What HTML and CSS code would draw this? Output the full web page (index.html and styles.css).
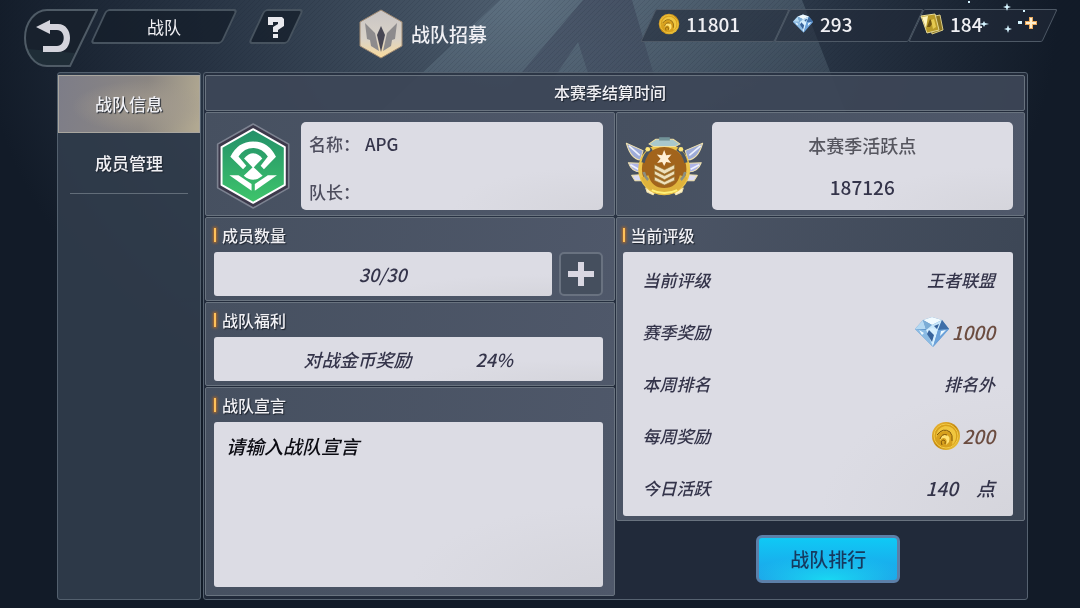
FILE: index.html
```html
<!DOCTYPE html>
<html lang="zh-CN">
  <head>
    <meta charset="utf-8">
    <title>战队</title>
    <link rel="stylesheet" href="styles.css">
  </head>
  <body>
    <svg class="backdrop" viewBox="0 0 1080 608" preserveAspectRatio="xMidYMin slice" aria-hidden="true">
      <defs>
        <linearGradient id="beam" x1="0" y1="0" x2="0" y2="1">
          <stop offset="0" stop-color="#8aa4b2" stop-opacity=".25"/>
          <stop offset=".5" stop-color="#8aa4b2" stop-opacity="0"/>
        </linearGradient>
        <linearGradient id="leg" x1="0" y1="0" x2="0" y2="1">
          <stop offset="0" stop-color="#3a4257" stop-opacity=".55"/>
          <stop offset=".5" stop-color="#3a4257" stop-opacity="0"/>
        </linearGradient>
        <pattern id="hatch" width="5" height="5" patternUnits="userSpaceOnUse">
          <path d="M-1 1l2-2M0 5l5-5M4 6l2-2" stroke="#0f1a28" stroke-opacity=".12"/>
        </pattern>
      </defs>
      <path fill="url(#beam)" d="M500 0H802L1040 608H-150Z"/>
      <path fill="url(#leg)" d="M583 0H632L810 608H760L578 42L200 608H68Z"/>
      <path fill="url(#hatch)" d="M0 0H1080V72H0Z"/>
    </svg>

    <!-- shared icons -->
    <svg class="symbols" aria-hidden="true">
      <defs>
        <linearGradient id="gold" x1="0" y1="0" x2="1" y2="1">
          <stop offset="0" stop-color="#f0bd3c"/>
          <stop offset=".5" stop-color="#c58a10"/>
          <stop offset="1" stop-color="#f4cf45"/>
        </linearGradient>
        <symbol id="coin" viewBox="0 0 30 30">
          <circle cx="15" cy="15" r="14" fill="url(#gold)"/>
          <circle cx="15" cy="15" r="12" fill="#d7a01d" stroke="#f3cb45"/>
          <path d="M5 17Q5 7 14 5Q23 5 25 13Q26 20 21 24Q23 15 18 11Q12 8 7 13Z" fill="#f0c63f"/>
          <path d="M9 20Q9 13 15 14Q20 15 18 21L15 24Q17 18 13 17Q10 17 9 20Z" fill="#ffe273"/>
          <path d="M6 14Q12 6 19 11Q22 14 21 20M9 18Q11 12 16 14M11 24Q9 19 13 19Q15 20 14 23" fill="none" stroke="#80560a"/>
        </symbol>
        <symbol id="diamond" viewBox="0 0 36 32">
          <path d="M1 13L9 4L18 1L28 4L35 13L19 31Z" fill="#5d93c8"/>
          <path d="M1 13L9 4L12 13Z" fill="#b5d9f2"/>
          <path d="M9 4L18 1L28 4L18 9Z" fill="#f2fbff"/>
          <path d="M9 4L18 9L12 14Z" fill="#7cadd6"/>
          <path d="M18 9L28 4L24 14L12 14Z" fill="#c9e7fa"/>
          <path d="M28 4L35 13L24 14Z" fill="#3e6ea8"/>
          <path d="M1 13L12 14L19 31Z" fill="#8bbbe4"/>
          <path d="M12 14L18 12L24 14L19 31Z" fill="#d8f0ff"/>
          <path d="M24 14L35 13L19 31Z" fill="#6ca2da"/>
          <path d="M15 14L20 19L18 26L13 18ZM20 10L25 8L23 13Z" fill="#39649c"/>
          <path d="M5 14L10 17L8 19ZM27 15L32 14L26 20Z" fill="#eefaff"/>
        </symbol>
        <symbol id="card" viewBox="0 0 24 22">
          <path d="M10 4L20 2L23 17L12 21Z" fill="#8a7420" stroke="#d9cb86"/>
          <path d="M1 3L15 1L19 17L7 20Z" fill="#b89a28" stroke="#e6da98"/>
          <path d="M2 4L8 3L6 15Z" fill="#fff6bf"/>
          <path d="M7 14L10 6L15 12L12 11L10 14Z" fill="#6f5410"/>
          <path d="M11 7L14 6L16 14L13 16Z" fill="#e6ca50"/>
        </symbol>
      </defs>
    </svg>

    <header class="topbar">
      <button type="button" class="back" aria-label="返回">
        <svg viewBox="0 0 76 60">
          <path d="M25 1H75L48 57H25A22 28 0 0 1 25 1Z" fill="#18212d" stroke="#4f5b66" stroke-width="2"/>
          <path d="M5 40Q10 56 25 56H47L53 44Z" fill="#4b7473" opacity=".15"/>
          <path d="M14 18L28 11V15H36C52 15 52 43 36 43H21V37H35C44 37 44 21 35 21H28V25Z" fill="#d4d4dc"/>
        </svg>
      </button>
      <h1 class="slant title">战队</h1>
      <button type="button" class="slant help" aria-label="帮助">
        <svg viewBox="0 0 18 22">
          <path d="M1 1H15L17 3V10L11 14V16H6V11L11 8V6H6V9H1ZM6 18H11V22H6Z" fill="#e9e9ee"/>
        </svg>
      </button>
      <a class="recruit" href="#recruit">
        <svg viewBox="0 0 46 50">
          <defs>
            <linearGradient id="ivory" x1="0" y1="0" x2="0" y2="1">
              <stop offset="0" stop-color="#c9c5c4"/>
              <stop offset=".6" stop-color="#d9d2c8"/>
              <stop offset="1" stop-color="#fbdc9c"/>
            </linearGradient>
          </defs>
          <path d="M23 1L44 13V37L23 49L2 37V13Z" fill="url(#ivory)" stroke="#a08a73"/>
          <path d="M23 17L27 26L23 43L19 26Z" fill="#474653"/>
          <path d="M7 14L17 24L21 42L13 37L12 31L9 30Z" fill="#8d8b8d"/>
          <path d="M39 14L29 24L25 42L33 37L34 31L37 30Z" fill="#8d8b8d"/>
        </svg>
        <span>战队招募</span>
      </a>
      <ul class="wallet">
        <li><svg class="coin-small"><use href="#coin"/></svg>11801</li>
        <li><svg class="diamond-small"><use href="#diamond"/></svg>293</li>
        <li>
          <svg class="card-small"><use href="#card"/></svg>184
          <button type="button" class="buy" aria-label="购买">
            <svg viewBox="0 0 14 14"><path d="M7 1V13M1 7H13" stroke="#e9a85c" stroke-width="4"/><path d="M7 2V12M2 7H12" stroke="#fff0cf" stroke-width="2"/></svg>
          </button>
          <svg class="sparks" viewBox="0 0 90 40" aria-hidden="true">
            <g fill="#d5f4ff">
              <path d="M46 3L47 6L50 7L47 8L46 11L45 8L42 7L45 6Z"/>
              <path d="M47 25L48 28L51 29L48 30L47 33L46 30L43 29L46 28Z"/>
              <path d="M23 21L24 23L28 24L24 25L23 27L22 25L18 24L22 23Z"/>
              <path d="M57 21H61V24H57ZM62 10H64V12H62ZM7 1H9V3H7Z"/>
            </g>
          </svg>
        </li>
      </ul>
    </header>

    <main class="board">
      <nav class="sidebar">
        <a class="tab active" href="#info">战队信息</a>
        <a class="tab" href="#members">成员管理</a>
      </nav>

      <div class="content">
        <div class="panel season">本赛季结算时间</div>

        <div class="columns">
          <div class="column">
            <section class="panel hero">
              <svg class="crest" viewBox="0 0 240 270" role="img" aria-label="队徽">
                <defs>
                  <linearGradient id="green" x1="0" y1="0" x2="0" y2="1">
                    <stop offset="0" stop-color="#239069"/>
                    <stop offset="1" stop-color="#3ec56b"/>
                  </linearGradient>
                </defs>
                <path d="M119 6L228 68V202L119 264L10 202V68Z" fill="#3c394b" stroke="#7d8391" stroke-width="5" stroke-linejoin="round"/>
                <path d="M119 22L216 77V193L119 248L22 193V77Z" fill="url(#green)" stroke="#fff" stroke-width="6" stroke-linejoin="round"/>
                <g fill="#fff">
                  <path d="M49 107Q72 60 119 60Q166 60 189 107L152 145L142 134L164 106Q146 80 119 80Q92 80 74 106L98 134L88 145Z"/>
                  <path d="M91 112Q119 80 147 112L119 141Z"/>
                  <path d="M119 137L148 165Q119 189 90 165Z"/>
                  <path d="M46 163H74L114 190V211Z"/>
                  <path d="M192 163H164L124 190V211Z"/>
                </g>
              </svg>
              <dl class="card identity">
                <div><dt>名称：</dt><dd>APG</dd></div>
                <div><dt>队长：</dt><dd></dd></div>
              </dl>
            </section>

            <section class="panel">
              <h2>成员数量</h2>
              <div class="members">
                <div class="card line">30/30</div>
                <button type="button" class="add" aria-label="增加成员">
                  <svg viewBox="0 0 26 24"><path d="M10 0H16V9H26V15H16V24H10V15H0V9H10Z" fill="#d9d7e2"/></svg>
                </button>
              </div>
            </section>

            <section class="panel">
              <h2>战队福利</h2>
              <div class="card line"><span>对战金币奖励</span><span>24%</span></div>
            </section>

            <section class="panel slogan">
              <h2><label for="slogan">战队宣言</label></h2>
              <textarea id="slogan" class="card" placeholder="请输入战队宣言"></textarea>
            </section>
          </div>

          <div class="column">
            <section class="panel hero">
              <svg class="medal" viewBox="50 75 236 190" role="img" aria-label="活跃徽章">
                <g stroke="#f1e2ae" stroke-width="3" stroke-linejoin="round">
                  <path d="M54 102L104 124L96 152Q68 150 54 102Z" fill="#9eacd9"/>
                  <path d="M60 160L94 162L96 188Q70 188 60 160Z" fill="#aeb4e8"/>
                  <path d="M70 198L98 196L104 214L80 214Z" fill="#dcdcf5"/>
                  <path d="M282 102L230 124L238 152Q268 150 282 102Z" fill="#9eacd9"/>
                  <path d="M278 160L242 162L240 188Q268 188 278 160Z" fill="#aeb4e8"/>
                  <path d="M266 198L238 196L232 214L256 214Z" fill="#dcdcf5"/>
                  <path d="M112 236L142 244L134 256L116 248ZM224 236L194 244L202 256L220 248Z" fill="#fff3c4"/>
                </g>
                <path d="M62 110L94 138M276 110L242 138M66 166L90 180M272 166L246 180" stroke="#eef2ff" stroke-width="5"/>
                <circle cx="167" cy="180" r="72" fill="#a2641c" stroke="#edc54c" stroke-width="11"/>
                <path d="M98 204A72 72 0 0 0 236 204L214 198Q204 236 167 236Q130 236 120 198Z" fill="#dfb33c"/>
                <path d="M104 160Q110 132 130 119M232 160Q226 132 206 119" fill="none" stroke="#4a5561" stroke-width="10"/>
                <path d="M106 188Q110 204 119 212M230 188Q226 204 217 212" fill="none" stroke="#8c8f80" stroke-width="8"/>
                <path d="M122 104L142 90H194L214 104L200 112H136Z" fill="#a9c8cc" stroke="#f0dfa2" stroke-width="3"/>
                <path d="M152 84H184V94H152Z" fill="#729398"/>
                <circle cx="118" cy="120" r="7" fill="#ffe77a"/>
                <circle cx="217" cy="120" r="7" fill="#ffe77a"/>
                <path d="M167 122L173 138L189 136L178 148L188 161L173 158L167 170L161 158L146 161L156 148L145 136L161 138Z" fill="#fff0d5"/>
                <path d="M138 166L168 181L198 166V178L168 194L138 178ZM138 184L168 199L198 184V195L168 211L138 195ZM138 202L168 217L198 202V213L168 227L138 213Z" fill="#efe0bb" stroke="#9b7a37" stroke-width="2"/>
                <path d="M130 242Q167 260 206 242" fill="none" stroke="#fff178" stroke-width="6"/>
              </svg>
              <div class="card activity">
                <span>本赛季活跃点</span>
                <strong>187126</strong>
              </div>
            </section>

            <section class="panel rating">
              <h2>当前评级</h2>
              <dl class="card">
                <div><dt>当前评级</dt><dd>王者联盟</dd></div>
                <div><dt>赛季奖励</dt><dd class="prize"><svg class="diamond-large"><use href="#diamond"/></svg>1000</dd></div>
                <div><dt>本周排名</dt><dd>排名外</dd></div>
                <div><dt>每周奖励</dt><dd class="prize"><svg class="coin-large"><use href="#coin"/></svg>200</dd></div>
                <div><dt>今日活跃</dt><dd class="points"><span>140</span><span>点</span></dd></div>
              </dl>
            </section>

            <button type="button" class="ranking">战队排行</button>
          </div>
        </div>
      </div>
    </main>
  </body>
</html>
```
FILE: styles.css
```css
* {
  box-sizing: border-box;
}

body {
  display: flex;
  flex-direction: column;
  min-height: 100vh;
  margin: 0;
  padding: 0 52px 8px 57px;
  background: radial-gradient(ellipse 50% 75% at 48% 0, #4f5f70, #273343 60%, #121b28);
  color: #f0f0f4;
  font-family: "Noto Sans CJK SC", sans-serif;
  font-size: 17px;
  line-height: 24px;
}

h1, h2, dl, dd, ul {
  margin: 0;
  padding: 0;
}

button {
  padding: 0;
  border: none;
  background: none;
  color: inherit;
  font: inherit;
  cursor: pointer;
}

a {
  color: inherit;
  text-decoration: none;
}

svg {
  display: block;
  flex: none;
}

.backdrop {
  position: fixed;
  top: 0;
  left: 0;
  z-index: -1;
  width: 100%;
  height: 100%;
}

.symbols {
  position: absolute;
  width: 0;
  height: 0;
}

/* Top bar */
.topbar {
  display: flex;
  align-items: flex-start;
  height: 72px;
  margin: 0 -22px 0 -35px;
  padding-top: 9px;
}

.back svg {
  width: 76px;
  height: 60px;
}

.slant,
.wallet li {
  position: relative;
  display: flex;
  align-items: center;
}

/* slanted frames */
.slant::before,
.wallet li::before {
  content: "";
  position: absolute;
  inset: 0;
  z-index: -1;
  border: 2px solid #47535f;
  border-radius: 4px;
  background: rgba(20, 29, 41, 0.75);
  transform: skewX(-25deg);
}

.title {
  justify-content: center;
  width: 132px;
  height: 35px;
  font-size: 17px;
  font-weight: normal;
}

.help {
  justify-content: center;
  width: 40px;
  height: 35px;
  margin-left: 26px;
}

.help svg {
  width: 18px;
  height: 22px;
}

.recruit {
  display: flex;
  align-items: center;
  gap: 7px;
  margin-left: 62px;
  font-size: 19px;
  font-weight: 500;
}

.recruit svg {
  width: 46px;
  height: 50px;
}

.wallet {
  display: flex;
  margin-left: auto;
  list-style: none;
}

.wallet li {
  gap: 6px;
  width: 134px;
  height: 33px;
  padding: 0 0 4px 10px;
  font-size: 19px;
  font-weight: 500;
}

.wallet li:last-child {
  padding-left: 4px;
}

.wallet li::before {
  border-width: 1px;
  border-color: #4e5966;
  border-radius: 2px;
  background: rgba(34, 42, 57, 0.6);
}

.coin-small {
  width: 22px;
  height: 22px;
}

.diamond-small {
  width: 22px;
  height: 19px;
}

.card-small {
  width: 24px;
  height: 22px;
}

.buy {
  margin: 0 12px 2px auto;
}

.buy svg {
  width: 14px;
  height: 14px;
}

.sparks {
  position: absolute;
  top: -9px;
  right: -1px;
  width: 90px;
  height: 40px;
}

/* Board */
.board {
  display: flex;
  flex: 1;
  gap: 2px;
}

.sidebar {
  width: 144px;
  padding-top: 2px;
  border: 1px solid #53606e;
  border-radius: 3px;
  background: rgba(50, 62, 77, 0.85);
}

.tab {
  display: block;
  padding: 16px 0;
  font-weight: 500;
  text-align: center;
  text-shadow: 1px 1px 1px #1c222c;
}

.tab.active {
  border: 1px solid #a9a69f;
  background: radial-gradient(ellipse at 60% 55%, #a29a8e, transparent 60%),
    linear-gradient(100deg, #7d7d88, #8b8682 60%, #b3aa92);
}

.tab:not(.active) {
  margin: 0 12px;
  padding: 18px 0;
  border-bottom: 1px solid #626d79;
}

.content {
  display: flex;
  flex: 1;
  flex-direction: column;
  gap: 1px;
  padding: 2px 2px 3px 1px;
  border: 1px solid #566270;
  border-radius: 3px;
  background: rgba(38, 46, 62, 0.8);
}

.columns {
  display: flex;
  flex: 1;
  gap: 1px;
}

.column {
  display: flex;
  flex: 1;
  flex-direction: column;
  gap: 1px;
}

.panel {
  padding: 0 11px 4px 8px;
  border: 1px solid #69737f;
  border-radius: 2px;
  background: linear-gradient(100deg, #465060, #4f586a);
}

.season {
  padding: 4px 10px 6px 0;
  background: rgba(69, 79, 96, 0.7);
  font-size: 16px;
  font-weight: 500;
  text-align: center;
  text-shadow: 1px 1px 1px #1c222c;
}

.panel h2 {
  display: flex;
  align-items: center;
  gap: 6px;
  height: 34px;
  font-size: 16px;
  font-weight: 500;
  text-shadow: 1px 1px 1px #1c222c;
}

.panel h2::before {
  content: "";
  width: 2px;
  height: 14px;
  background: #ffc15a;
  box-shadow: 0 0 3px 1px #b06a26;
}

.card {
  border-radius: 3px;
  background: radial-gradient(ellipse at 100% 100%, #d5d5dc, #dcdce4 35%);
  color: #34344a;
}

/* Crest and medal */
.hero {
  display: flex;
  align-items: center;
  gap: 8px;
  height: 104px;
  padding: 9px 11px 5px 8px;
}

.crest {
  width: 79px;
  height: 88px;
}

.medal {
  width: 79px;
  height: 64px;
}

.hero .card {
  flex: 1;
  height: 88px;
  border-radius: 5px;
}

.identity {
  display: flex;
  flex-direction: column;
  justify-content: space-between;
  padding: 10px 8px 6px;
  color: #4d4d5d;
  font-weight: 500;
}

.identity div {
  display: flex;
  gap: 5px;
}

.identity dd {
  color: #34344a;
}

.activity {
  display: flex;
  flex-direction: column;
  align-items: center;
  justify-content: space-between;
  padding: 11px 0;
  color: #56565f;
  font-size: 18px;
  font-weight: 500;
}

.activity strong {
  color: #34344a;
  font-size: 19px;
  font-weight: 500;
}

/* Member count and welfare */
.members {
  display: flex;
  gap: 7px;
}

.line {
  display: flex;
  flex: 1;
  align-items: center;
  justify-content: center;
  gap: 64px;
  height: 44px;
  font-size: 18px;
  font-style: italic;
  font-weight: 500;
}

.add {
  display: flex;
  align-items: center;
  justify-content: center;
  width: 44px;
  height: 44px;
  border: 2px solid #697280;
  border-radius: 5px;
  background: #454f5e;
}

.add svg {
  width: 26px;
  height: 24px;
}

.slogan {
  display: flex;
  flex: 1;
  flex-direction: column;
  padding-bottom: 8px;
}

textarea {
  display: block;
  flex: 1;
  width: 100%;
  padding: 12px;
  border: none;
  font: italic 500 19px/24px "Noto Sans CJK SC", sans-serif;
  resize: none;
}

textarea::placeholder {
  color: #0b0b12;
  opacity: 1;
}

/* Rating */
.rating {
  padding: 0 11px 4px 6px;
  background: linear-gradient(100deg, #4d5667, #3b4554);
}

.rating dl {
  padding: 2px 18px 2px 20px;
  font-style: italic;
  font-weight: 500;
}

.rating dl div {
  display: flex;
  align-items: center;
  justify-content: space-between;
  height: 52px;
}

.rating .prize {
  display: flex;
  align-items: center;
  gap: 2px;
  color: #6b4c40;
  font-size: 19px;
}

.points {
  display: flex;
  gap: 18px;
  font-size: 19px;
}

.diamond-large {
  width: 36px;
  height: 32px;
}

.coin-large {
  width: 30px;
  height: 30px;
}

.ranking {
  align-self: center;
  width: 144px;
  height: 48px;
  margin: 13px 0 0 16px;
  border: 3px solid #5c7fa8;
  border-radius: 6px;
  background: radial-gradient(ellipse 60% 60% at 50% 100%, #19d8f2, transparent),
    linear-gradient(#0fc9f5, #1e9fe8);
  color: #163a5f;
  font-size: 19px;
  font-weight: 500;
}
```
